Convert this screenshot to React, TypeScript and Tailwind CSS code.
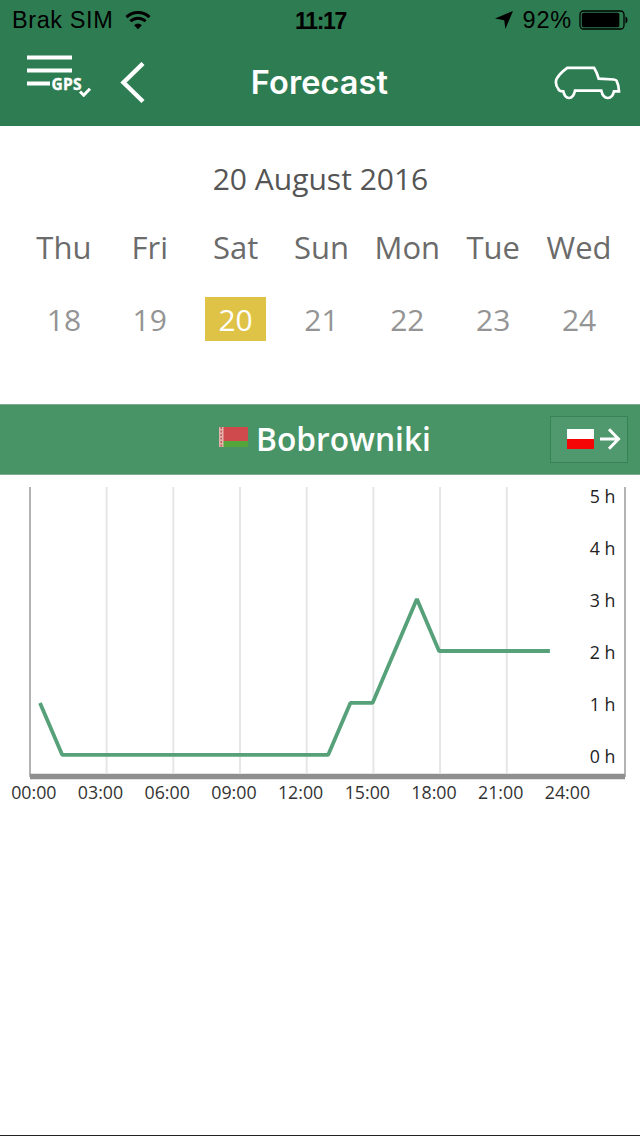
import React from "react"

const days = [
    { name: "Thu", date: 18 },
    { name: "Fri", date: 19 },
    { name: "Sat", date: 20 },
    { name: "Sun", date: 21 },
    { name: "Mon", date: 22 },
    { name: "Tue", date: 23 },
    { name: "Wed", date: 24 },
]

const hours = ["00:00", "03:00", "06:00", "09:00", "12:00", "15:00", "18:00", "21:00", "24:00"]

// Waiting time in hours, one value per hour of the day
const waiting = [1, 0, 0, 0, 0, 0, 0, 0, 0, 0, 0, 0, 0, 0, 1, 1, 2, 3, 2, 2, 2, 2, 2, 2]

function StatusBar() {
    return (
        <div className="flex h-10 items-center justify-between pl-3 pr-[11px] pt-0.5 text-[23.5px] leading-none text-black font-['Liberation_Sans',sans-serif]">
            <div className="flex w-[240px] items-center gap-3">
                <span className="tracking-[0.6px]">Brak SIM</span>
                <svg className="-mt-0.5" width="26" height="20" viewBox="0 0 26 20" fill="none" stroke="currentColor" strokeWidth="3">
                    <path d="M1.5 7.2a16.5 16.5 0 0 1 23 0" />
                    <path d="M5.4 11.3a10.8 10.8 0 0 1 15.2 0" />
                    <path d="M13 19.2l-3.9-4a5.6 5.6 0 0 1 7.8 0z" fill="currentColor" stroke="none" />
                </svg>
            </div>
            <span className="text-[23px] font-bold tracking-[-1.3px]">11:17</span>
            <div className="flex w-[240px] items-center justify-end">
                <svg className="-mt-0.5" width="18" height="18" viewBox="0 0 18 18" fill="currentColor">
                    <path d="M18 0L10.4 18 9.2 9.2 0 7.6z" />
                </svg>
                <span className="ml-[10px] tracking-[0.8px]">92%</span>
                <svg className="-mt-0.5 ml-[7px]" width="50" height="20" viewBox="0 0 50 20" fill="currentColor">
                    <rect x="1" y="1" width="44" height="18" rx="3.5" fill="none" stroke="currentColor" strokeWidth="1.3" />
                    <rect x="2.8" y="2.8" width="37.5" height="14.4" rx="1.5" />
                    <path d="M46.5 6.5c2.6.6 2.6 6.4 0 7z" />
                </svg>
            </div>
        </div>
    )
}

function NavBar() {
    return (
        <div className="flex h-[86px] items-center justify-between pl-[27px] pr-[19px] text-white">
            <div className="flex w-[210px] items-center">
                <button type="button" title="Menu" className="-mt-5">
                    <svg width="66" height="48" viewBox="0 0 66 48" fill="none" stroke="currentColor">
                        <path d="M0 8.5h45M0 21.5h45M0 34.5h23" strokeWidth="4" />
                        <text x="24.5" y="40.5" fill="currentColor" stroke="currentColor" strokeWidth="0.4" fontSize="15.5" fontWeight="700" className="font-['Open_Sans',sans-serif]" textLength="30">GPS</text>
                        <path d="M53 42.500l3.7 3.7 6.3-6.5" strokeWidth="3" />
                    </svg>
                </button>
                <button type="button" title="Back" className="ml-[27px]">
                    <svg width="26" height="42" viewBox="0 0 26 42" fill="none" stroke="currentColor" strokeWidth="4.4">
                        <path d="M23 1.5L3.500 20.500l19.500 19" />
                    </svg>
                </button>
            </div>
            <h1 className="pt-px text-[32.5px] font-semibold leading-none tracking-[0.1px] font-['Inter',sans-serif]">Forecast</h1>
            <div className="flex w-[219px] justify-end">
                <svg width="67" height="34" viewBox="0 0 67 34" fill="none" stroke="currentColor" strokeWidth="2.7">
                    <path d="M13.300 1.800H40q3 4.500 4.700 10.900l15 .8q2.300.3 2.800 1.200 2.300 4.500 2.500 10.600h-5c-2 9-10.500 9-12.700-.6H21c-2.200 9.600-9.700 9.600-11.700.6q-4.500 0-4.900-2.300Q1 19 2.300 13.500q3-6 11-11.700z" />
                </svg>
            </div>
        </div>
    )
}

function Calendar() {
    return (
        <section className="h-[278px] pl-[21px] pr-[18px] pt-[31px] text-center text-[30px] leading-[44px] font-['Open_Sans',sans-serif]">
            <h2 className="pr-0.5 text-[#555]">20 August 2016</h2>
            <div className="mt-6 grid grid-cols-7">
                {days.map((day) => (
                    <div key={day.name} className="flex flex-col items-center gap-7">
                        <span className="text-[31px] text-[#6b6b6b]">{day.name}</span>
                        <span className={day.date === 20 ? "w-[61px] bg-[#dfc347] pt-px leading-[43px] text-white" : "w-[61px] pt-px leading-[43px] text-[#949494]"}>
                            {day.date}
                        </span>
                    </div>
                ))}
            </div>
        </section>
    )
}

function CrossingBar() {
    return (
        <div className="flex h-[71px] items-center justify-between border-y border-[#7dae92] bg-[#489466] pr-3 text-white">
            <div className="w-[78px]" />
            <div className="flex items-center gap-2 pl-[22px]">
                <svg className="-mt-1" width="29" height="20" viewBox="0 0 29 20">
                    <rect width="29" height="14" fill="#cf4a4c" />
                    <rect y="14" width="29" height="6" fill="#55a63a" />
                    <rect width="4.500" height="20" fill="#e3b3ad" />
                    <path d="M2.200 0v20" stroke="#c25c5a" strokeWidth="1.500" strokeDasharray="2 1.500" />
                </svg>
                <span className="-mt-0.5 text-[31.7px] font-semibold leading-none font-['Open_Sans',sans-serif]">Bobrowniki</span>
            </div>
            <button type="button" className="-mt-px flex h-[47px] w-[78px] items-center gap-1.5 border border-[#378257] bg-[#50996e] pl-4">
                <span className="flex h-5 w-[27px] flex-col">
                    <span className="h-2.5 bg-white" />
                    <span className="h-2.5 bg-[#f50505]" />
                </span>
                <svg width="21" height="22" viewBox="0 0 21 22" fill="none" stroke="currentColor" strokeWidth="3">
                    <path d="M0 11h18M9 1.200l9.500 9.800L9 20.800" />
                </svg>
            </button>
        </div>
    )
}

function Chart() {
    const points = waiting.map((value, i) => `${40 + i * 22.17},${279.8 - value * 51.9}`).join(" ")

    return (
        <svg width="640" height="335" viewBox="0 0 640 335" className="block text-[17.8px] font-['Open_Sans',sans-serif]">
            {hours.slice(1, 8).map((hour, i) => (
                <path key={hour} d={`M${106.6 + i * 66.7} 12v286`} stroke="#e6e6e6" strokeWidth="2" />
            ))}
            <path d="M30 12v290M625 12v290" stroke="#b3b3b3" strokeWidth="2" />
            <path d="M30 301.500h595" stroke="#8f8f8f" strokeWidth="5.500" />
            <polyline points={points} fill="none" stroke="#57a17a" strokeWidth="3.800" strokeLinejoin="bevel" />
            {[0, 1, 2, 3, 4, 5].map((value) => (
                <text key={value} x="615.500" y={287.500 - value * 52} textAnchor="end" fill="#222">{value} h</text>
            ))}
            {hours.map((hour, i) => (
                <text key={hour} x={33.800 + i * 66.700} y="324" textAnchor="middle" fill="#333">{hour}</text>
            ))}
        </svg>
    )
}

export default function App() {
    return (
        <div className="flex h-[1136px] w-[640px] flex-col overflow-hidden border-b border-[#222] bg-white">
            <header className="h-[126px] shrink-0 bg-[#2e7d52]">
                <StatusBar />
                <NavBar />
            </header>
            <Calendar />
            <CrossingBar />
            <Chart />
        </div>
    )
}
